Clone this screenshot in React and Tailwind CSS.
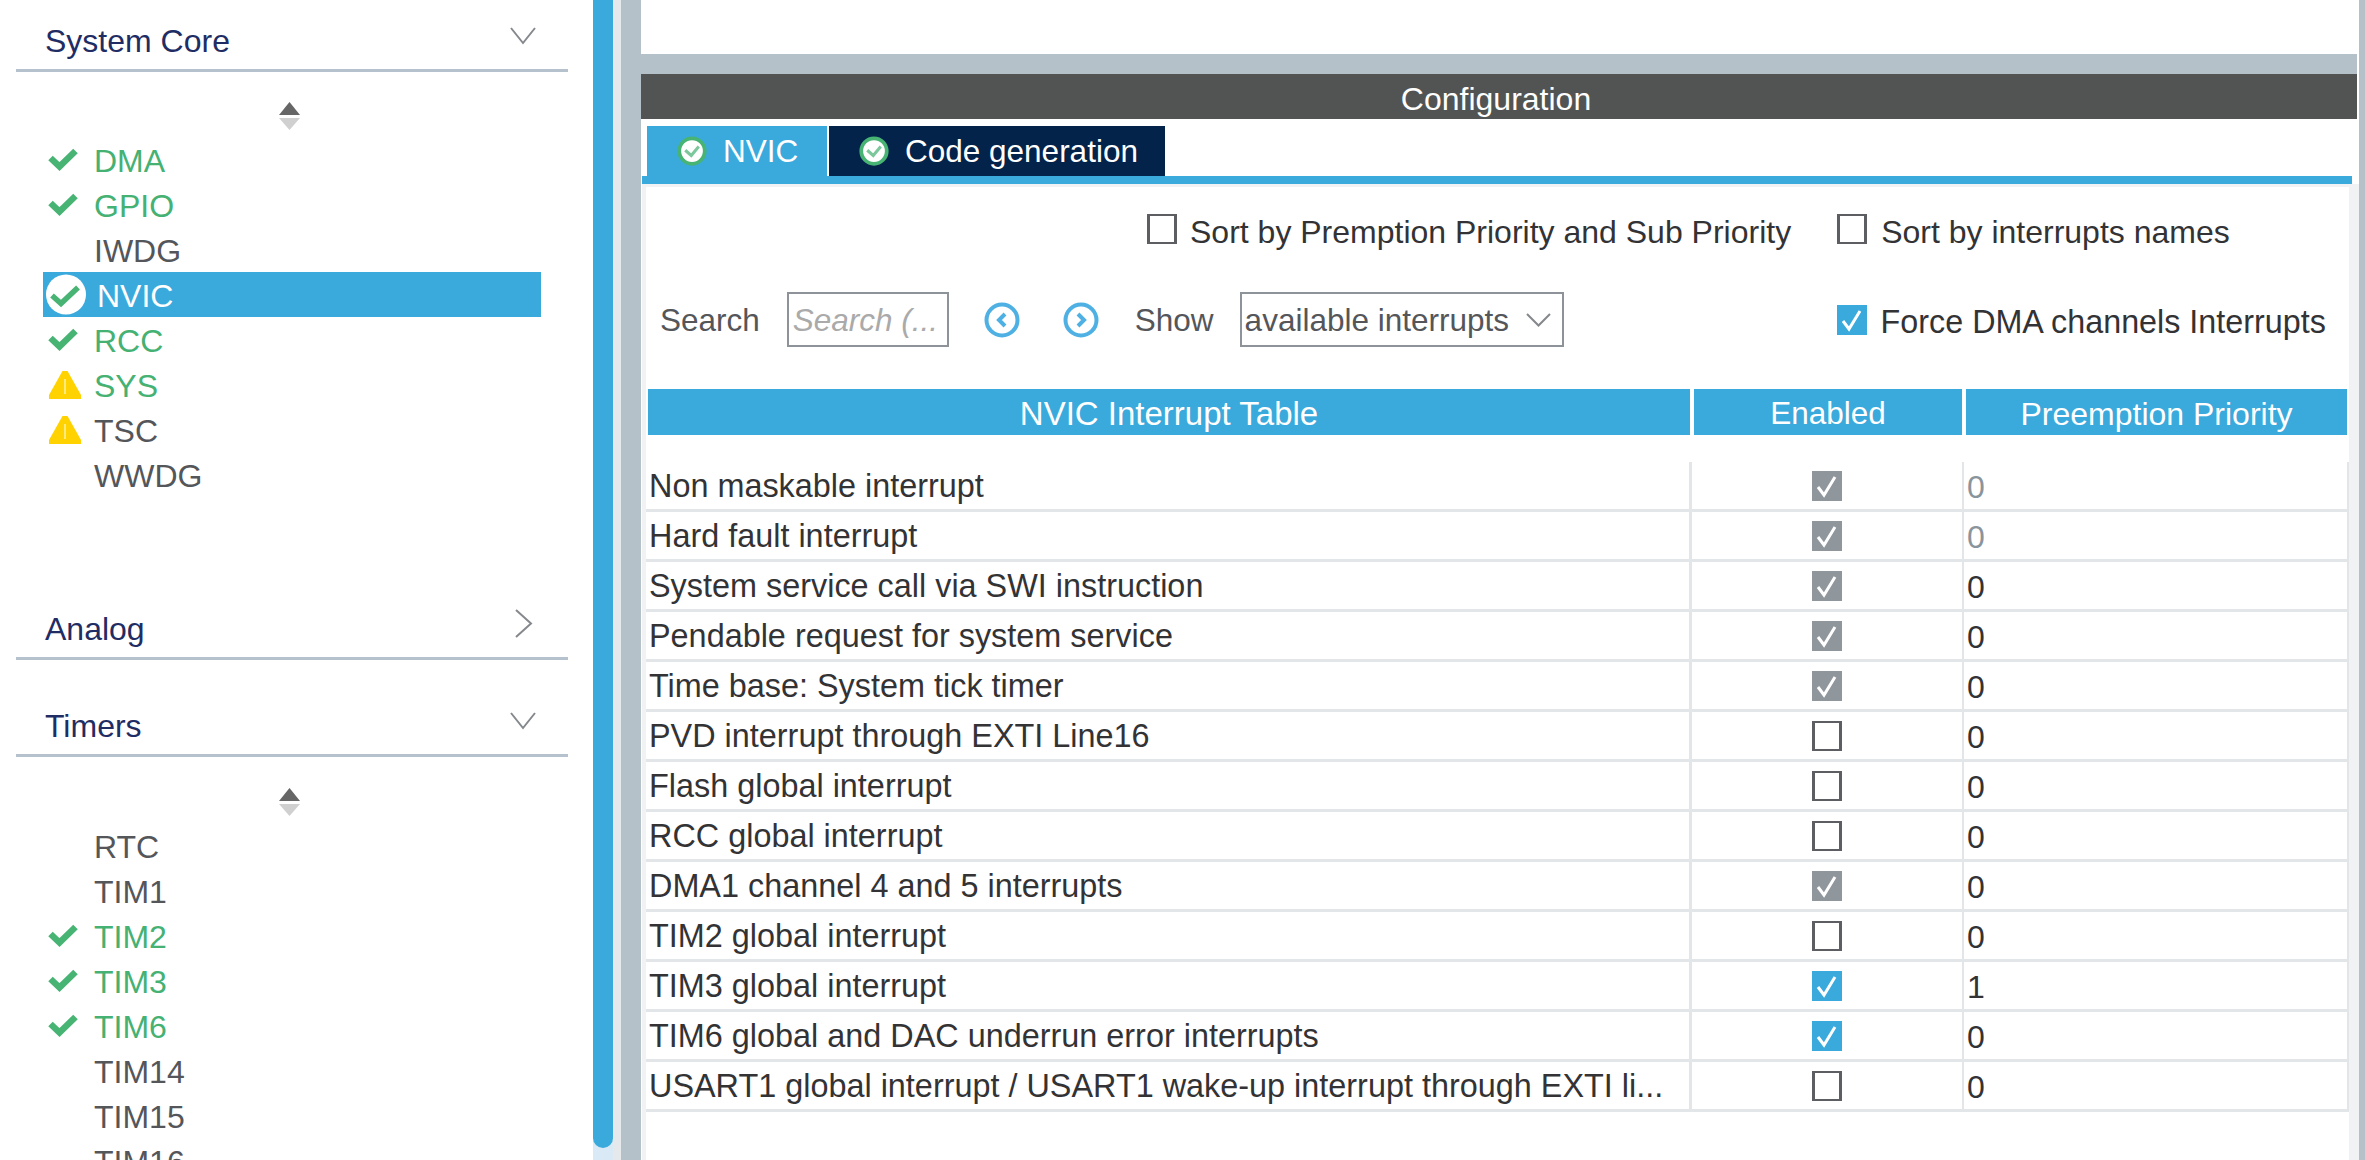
import { Fragment } from 'react';

const CheckMark = () => (
  <svg viewBox="0 0 30 25" className="w-[30px] h-[25px]">
    <path d="M2.5 11 L11.5 19.5 L27.5 4" fill="none" stroke="#48b474" strokeWidth="6.5" />
  </svg>
);

const Warning = () => (
  <svg viewBox="0 0 32 28" className="w-[32px] h-[28px]">
    <path d="M13.5 0 H18.5 L32 24 V28 H0 V24 Z" fill="#ffd200" />
    <path d="M16 8 V23" stroke="#fff2a8" strokeWidth="1.5" />
  </svg>
);

const CircleCheck = ({ size = 'w-[40px] h-[41px]', ring = false }) => (
  <svg viewBox="0 0 40 40" className={size}>
    <circle cx="20" cy="20" r={ring ? 17 : 20} fill="#fff" stroke={ring ? '#48b474' : 'none'} strokeWidth={ring ? 5 : 0} />
    <path d={ring ? 'M11 19 L19 26 L29 14' : 'M6 21 L15 29 L32 13'} fill="none" stroke={ring ? '#7cc79b' : '#48b474'} strokeWidth={ring ? 4 : 5.5} />
  </svg>
);

const ScrollArrows = () => (
  <div className="flex justify-center pr-[5px]">
    <svg viewBox="0 0 21 28" className="w-[21px] h-[28px]">
      <path d="M10.5 0 L21 13 H0 Z" fill="#666" />
      <path d="M0 16 H21 L10.5 28 Z" fill="#d0d0d0" />
    </svg>
  </div>
);

const Chevron = ({ right }) => (
  <svg viewBox="0 0 24 24" className="w-[24px] h-[24px] overflow-visible">
    <path d={right ? 'M5 -3 L20 10.5 L5 24' : 'M0 3 L12 18 L24 3'} fill="none" stroke="#85888c" strokeWidth="2" />
  </svg>
);

const ArrowCircle = ({ next }) => (
  <svg viewBox="0 0 36 36" className="w-[36px] h-[36px]">
    <circle cx="18" cy="18" r="15.5" fill="none" stroke="#4fb0e3" strokeWidth="4" />
    <path d={next ? 'M15 12 L21 18 L15 24' : 'M21 12 L15 18 L21 24'} fill="none" stroke="#4fb0e3" strokeWidth="4" />
  </svg>
);

const systemCore = [
  { name: 'DMA', state: 'ok' },
  { name: 'GPIO', state: 'ok' },
  { name: 'IWDG' },
  { name: 'NVIC', state: 'selected' },
  { name: 'RCC', state: 'ok' },
  { name: 'SYS', state: 'warn', green: true },
  { name: 'TSC', state: 'warn' },
  { name: 'WWDG' },
];

const timers = [
  { name: 'RTC' },
  { name: 'TIM1' },
  { name: 'TIM2', state: 'ok' },
  { name: 'TIM3', state: 'ok' },
  { name: 'TIM6', state: 'ok' },
  { name: 'TIM14' },
  { name: 'TIM15' },
  { name: 'TIM16' },
];

const interrupts = [
  { name: 'Non maskable interrupt', check: 'locked', value: '0', dim: true },
  { name: 'Hard fault interrupt', check: 'locked', value: '0', dim: true },
  { name: 'System service call via SWI instruction', check: 'locked', value: '0' },
  { name: 'Pendable request for system service', check: 'locked', value: '0' },
  { name: 'Time base: System tick timer', check: 'locked', value: '0' },
  { name: 'PVD interrupt through EXTI Line16', check: 'off', value: '0' },
  { name: 'Flash global interrupt', check: 'off', value: '0' },
  { name: 'RCC global interrupt', check: 'off', value: '0' },
  { name: 'DMA1 channel 4 and 5 interrupts', check: 'locked', value: '0' },
  { name: 'TIM2 global interrupt', check: 'off', value: '0' },
  { name: 'TIM3 global interrupt', check: 'on', value: '1' },
  { name: 'TIM6 global and DAC underrun error interrupts', check: 'on', value: '0' },
  { name: 'USART1 global interrupt / USART1 wake-up interrupt through EXTI li...', check: 'off', value: '0' },
];

function Box({ state }) {
  if (state === 'off') {
    return <div className="w-[30px] h-[30px] border-y-2 border-x-[3px] border-[#5c5e61] bg-white"></div>;
  }
  return (
    <div className={`w-[30px] h-[30px] flex items-center justify-center ${state === 'on' ? 'bg-[#3aa9dc]' : 'bg-[#8f969c]'}`}>
      <svg viewBox="0 0 30 30" className="w-[30px] h-[30px]">
        <path d="M6 16 L12 24 L23 6" fill="none" stroke="#fff" strokeWidth="3" />
      </svg>
    </div>
  );
}

function SideRow({ item }) {
  const selected = item.state === 'selected';
  const green = item.state === 'ok' || item.green;
  return (
    <div className={`h-[45px] flex items-center ${selected ? 'bg-[#3aa9dc] text-white' : green ? 'text-[#45b172]' : 'text-[#54565a]'}`}>
      <div className={`flex items-center shrink-0 ${selected ? 'w-[54px] pl-[3px]' : item.state === 'warn' ? 'w-[51px] pl-[6px]' : 'w-[51px] pl-[5px]'}`}>
        {item.state === 'ok' && <CheckMark />}
        {item.state === 'warn' && <Warning />}
        {selected && <CircleCheck />}
      </div>
      <span className="pt-[3px]">{item.name}</span>
    </div>
  );
}

function SideHeader({ title, right }) {
  return (
    <div className="h-[49px] flex items-start justify-between pl-[29px] pr-[33px] border-b-[3px] border-[#b5c1cc] text-[#1f2d64] box-content">
      <span className="leading-[42px]">{title}</span>
      <div className="pt-[5px]"><Chevron right={right} /></div>
    </div>
  );
}

export default function App() {
  return (
    <div className="w-[2365px] h-[1160px] flex overflow-hidden bg-white text-[31.5px] font-['Liberation_Sans',Arial,sans-serif]">
      <aside className="w-[593px] shrink-0 pl-4 pr-[25px] pt-[20px] overflow-hidden text-[32px]">
        <SideHeader title="System Core" />
        <div className="mt-[30px] mb-[7px]"><ScrollArrows /></div>
        <div className="pl-[27px] pr-[27px]">
          {systemCore.map(item => <SideRow key={item.name} item={item} />)}
        </div>
        <div className="mt-[111px]"><SideHeader title="Analog" right /></div>
        <div className="mt-[45px]"><SideHeader title="Timers" /></div>
        <div className="mt-[31px] mb-[7px]"><ScrollArrows /></div>
        <div className="pl-[27px] pr-[27px]">
          {timers.map(item => <SideRow key={item.name} item={item} />)}
        </div>
      </aside>

      <div className="w-5 shrink-0 bg-[#d9e9f6]">
        <div className="h-[1148px] bg-[#3aa9dc] rounded-b-[10px]"></div>
      </div>
      <div className="w-2 shrink-0 bg-[#e6e9ec]"></div>
      <div className="w-5 shrink-0 bg-[#b5c1c8]"></div>

      <main className="flex-1 min-w-0 flex flex-col">
        <div className="h-[54px] bg-white"></div>
        <div className="h-5 bg-[#b5c1c8] mr-[2px]"></div>
        <div className="h-[45px] bg-[#525454] mr-[2px] pr-[6px] text-white text-center text-[32px] leading-[50px]">Configuration</div>

        <div className="h-[57px] pt-[7px] pl-[6px] flex gap-[2px] text-white">
          <div className="w-[180px] bg-[#3aa9dc] flex items-center pl-[30px] gap-[16px]">
            <CircleCheck size="w-[30px] h-[30px]" ring />
            <span className="pt-[2px]">NVIC</span>
          </div>
          <div className="w-[336px] bg-[#03234b] flex items-center pl-[30px] gap-[16px]">
            <CircleCheck size="w-[30px] h-[30px]" ring />
            <span className="pt-[2px]">Code generation</span>
          </div>
        </div>
        <div className="h-2 bg-[#3aa9dc] ml-px mr-[7px]"></div>

        <div className="flex-1 ml-px border-t-[3px] border-l-4 border-r-[10px] border-[#f0f2f4] flex flex-col text-[#333335] text-[32px]">
          <div className="h-[27px]"></div>
          <div className="flex items-center h-[30px] pl-[501px]">
            <Box state="off" />
            <span className="ml-[13px] pt-[5px]">Sort by Premption Priority and Sub Priority</span>
            <div className="ml-[46px]"><Box state="off" /></div>
            <span className="ml-[14px] pt-[5px]">Sort by interrupts names</span>
          </div>

          <div className="flex items-center h-[55px] mt-[48px] text-[#54565a] text-[31.5px]">
            <span className="ml-[14px] pt-[3px]">Search</span>
            <div className="ml-[27px] w-[162px] h-[55px] border-2 border-[#8e9399] flex items-center pl-[4px]">
              <span className="italic text-[#aaaaaa] whitespace-nowrap pt-[3px]">Search (...</span>
            </div>
            <div className="ml-[35px]"><ArrowCircle /></div>
            <div className="ml-[43px]"><ArrowCircle next /></div>
            <span className="ml-[36px] pt-[3px]">Show</span>
            <div className="ml-[26px] w-[324px] h-[55px] border-2 border-[#8e9399] flex items-center justify-between pl-[3px] pr-[11px]">
              <span className="pt-[3px]">available interrupts</span>
              <svg viewBox="0 0 25 14" className="w-[25px] h-[14px]">
                <path d="M1 1 L12.5 12.5 L24 1" fill="none" stroke="#85888c" strokeWidth="2" />
              </svg>
            </div>
            <div className="ml-[273px]"><Box state="on" /></div>
            <span className="ml-[14px] pt-[5px] text-[#333335] text-[32.3px] whitespace-nowrap">Force DMA channels Interrupts</span>
          </div>

          <div className="h-[46px] mt-[42px] ml-[2px] grid grid-cols-[1042px_268px_381px] grid-rows-[46px] gap-x-[4px] text-white leading-none">
            <div className="bg-[#3aa9dc] flex items-center justify-center text-[33px] pt-[3px]">NVIC Interrupt Table</div>
            <div className="bg-[#3aa9dc] flex items-center justify-center text-[31.5px] pt-[3px]">Enabled</div>
            <div className="bg-[#3aa9dc] flex items-center justify-center pt-[3px]">Preemption Priority</div>
          </div>

          <div className="mt-[27px] grid grid-cols-[1046px_272px_385px]">
            {interrupts.map(row => (
              <Fragment key={row.name}>
                <div className="h-[50px] border-b-[3px] border-r-[3px] border-[#e2e6e9] flex items-center pl-[3px] pt-[2px] min-w-0 whitespace-nowrap text-[32.4px]">
                  {row.name}
                </div>
                <div className="h-[50px] border-b-[3px] border-r-[2px] border-[#e2e6e9] flex items-center justify-center">
                  <Box state={row.check} />
                </div>
                <div className={`h-[50px] border-b-[3px] border-r-[2px] border-[#e2e6e9] flex items-center pl-[3px] pt-[2px] ${row.dim ? 'text-[#8a949c]' : ''}`}>
                  {row.value}
                </div>
              </Fragment>
            ))}
          </div>
        </div>
      </main>

      <div className="w-[6px] shrink-0 bg-[#b5c1c8]"></div>
    </div>
  );
}
